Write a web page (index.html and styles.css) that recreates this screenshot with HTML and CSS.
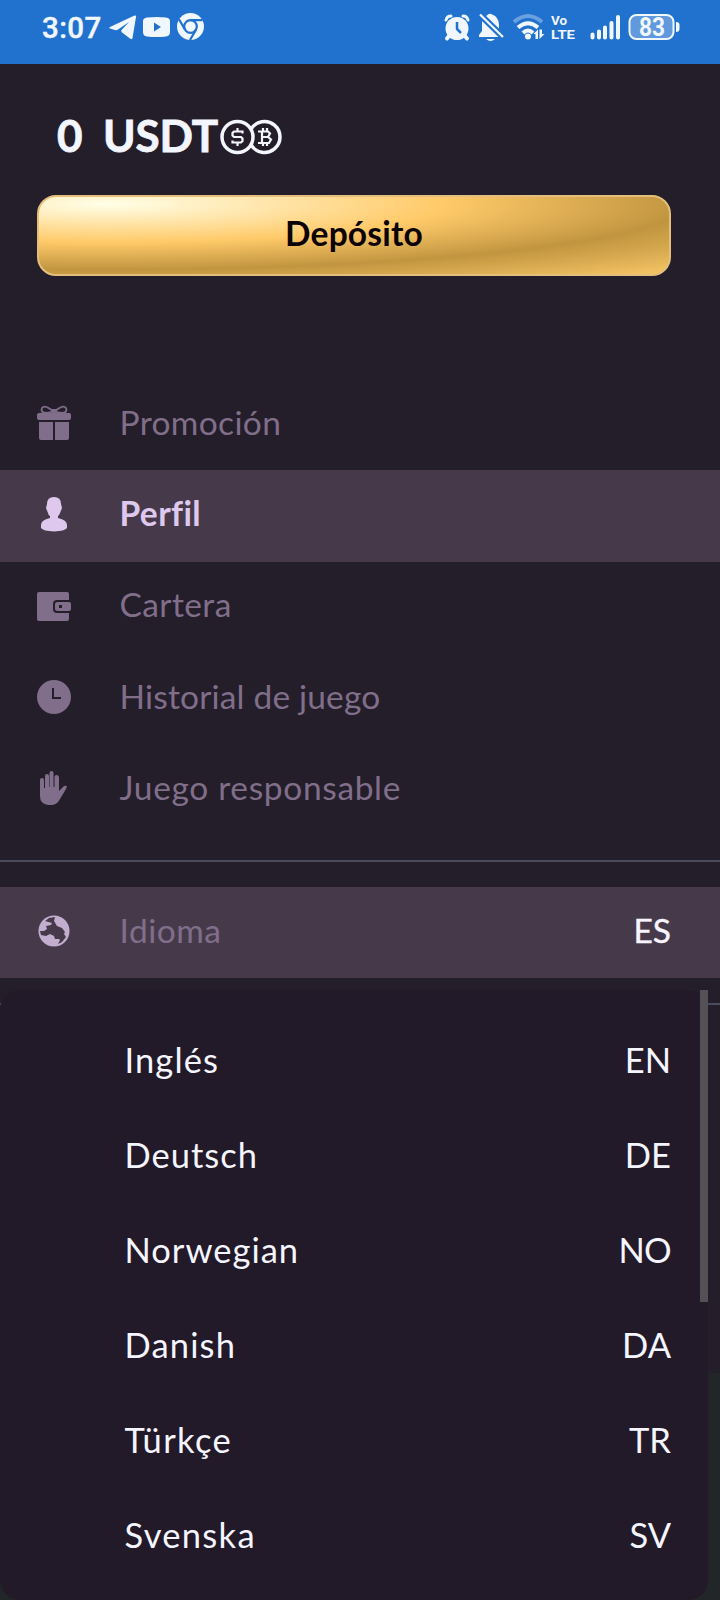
FILE: index.html
```html
<!DOCTYPE html>
<html lang="es">
<head>
<meta charset="utf-8">
<title>Perfil</title>
<link rel="stylesheet" href="styles.css">
</head>
<body>
<div class="screen">
  <header class="status">
    <span class="time">3:07</span>
    <svg class="status-left" width="96" height="28" viewBox="0 0 96 28" fill="currentColor">
      <path d="M1 14 25.500 2.500Q27.500 2 27 4L23.500 25Q23 27 21 25.500L13 19.500Q11.500 18 13 16.500L20 9 9 16.500Q7.500 17.500 6 17L1 15.500Q-.5 15 1 14Z"/>
      <path fill-rule="evenodd" d="M38 4.500Q48 3.500 57 4.500 61 5 61 8V19Q61 23 57 23.500 48 24.500 38 23.500 34 23 34 19V8Q34 5 38 4.500ZM45 9.500V18.500L52 14Z"/>
      <circle cx="81.500" cy="13.500" r="13.500"/>
      <g fill="none" stroke="#2172ce" stroke-width="2.200"><circle cx="81.500" cy="13.500" r="6.300"/><path d="M81.500 7.200H93.500M76 16.600 70 6.300M87 16.600 81 27"/></g>
    </svg>
    <svg class="status-right" width="240" height="30" viewBox="0 0 240 30" fill="currentColor">
      <circle cx="13" cy="15.500" r="11.500"/>
      <path d="M2 7Q3 3 7 3M24 7Q23 3 19 3" fill="none" stroke="currentColor" stroke-width="3" stroke-linecap="round"/>
      <path d="M5 23 3 25.500M21 23 23 25.500" stroke="currentColor" stroke-width="4" stroke-linecap="round"/>
      <path d="M13 9V16L17 20" fill="none" stroke="#2172ce" stroke-width="2.500"/>
      <path d="M39 6Q43 2 44 1.500 46 0 48 1.500 55 4 55 12V18L59 24H35V22L38 18V9Z"/>
      <path d="M42 26H51Q46.500 30 42 26Z"/>
      <path d="M36 1.500 59 24" stroke="#2172ce" stroke-width="6.500"/><path d="M36 1.500 59 24" stroke="currentColor" stroke-width="2.200"/>
      <g fill="none" stroke="currentColor" stroke-width="4"><path d="M70 9Q84 -3 98 9" opacity=".35"/><path d="M74 14.500Q84 6 94 14.500M79 20Q84 15 89 20"/></g>
      <circle cx="84" cy="23.500" r="3"/>
      <path d="M89.500 21 94 16.500V26H91.500V21ZM95.500 16.500V26L100.500 21H98V16.500Z"/>
      <text class="volte" x="107" y="11.500" textLength="16" lengthAdjust="spacingAndGlyphs">Vo</text>
      <text class="volte" x="107" y="26" textLength="24" lengthAdjust="spacingAndGlyphs">LTE</text>
      <g fill="none" stroke="currentColor" stroke-width="4" stroke-linecap="round"><path d="M148.500 21.500V24.500M155 18.500V24.500M161 14.500V24.500M167.500 10V24.500M174 4V24.500"/></g>
      <rect x="186" y="2.500" width="43" height="23" rx="6" opacity=".3"/>
      <rect x="185.500" y="2" width="44" height="24" rx="7" fill="none" stroke="currentColor" stroke-width="2"/>
      <path d="M232 9Q235.500 9 235.500 12V16Q235.500 19 232 19Z"/>
      <text class="charge" x="195" y="22.500" textLength="26" lengthAdjust="spacingAndGlyphs">83</text>
    </svg>
  </header>

  <section class="wallet">
    <div class="balance">
      <span class="amount">0</span><span class="currency">USDT</span>
      <svg class="coins" width="64" height="36" viewBox="0 0 64 36" fill="none" stroke="currentColor">
        <circle cx="17.500" cy="18" r="15.500" stroke-width="3.500"/>
        <path d="M31 10.400A15.500 15.500 0 1 1 31 25.600" stroke-width="3.500"/>
        <path d="M22.500 14.500V12.500H14L12.500 14V16.500L14 18H21L22.500 19.500V22L21 23.500H12.500V21.500M17.500 9V12M17.500 24V27" stroke-width="2.200"/>
        <path d="M38 12.500H48L50 14.500 48 18H42.500M48 18 51 20.500 49 24H38M42 12.500V24M43 9V12M47 9V12M43 24V27M47 24V27" stroke-width="2.200"/>
      </svg>
    </div>
    <button class="deposit"><span class="deposit-label">Depósito</span></button>
  </section>

  <nav class="menu">
    <a class="item">
      <svg class="icon" viewBox="0 0 36 36" fill="currentColor"><path d="M3 8H33Q35 8 35 10V13Q35 15 33 15H3Q1 15 1 13V10Q1 8 3 8ZM3 17H17V35H5Q3 35 3 33ZM19 17H33V33Q33 35 31 35H19Z"/><path d="M18 7Q9-1 6 3 4 8 11 8 16 7 18 6 20 7 25 8 32 8 30 3 27-1 18 7Z" fill="none" stroke="currentColor" stroke-width="1.800"/><rect x="15" y="4" width="6" height="4" rx="2"/></svg>
      <span class="label promo">Promoción</span>
    </a>
    <a class="item active">
      <svg class="icon" viewBox="0 0 36 36" fill="currentColor"><path d="M18 1Q25 1 25 8L26 12 24 17Q23 20 22 20V22Q31 24 31 29V32Q29 35 18 35.500 7 35 5 32V29Q5 24 14 22V20Q12 19 12 17L10 12 11 8Q11 1 18 1Z"/></svg>
      <span class="label profile">Perfil</span>
    </a>
    <a class="item">
      <svg class="icon" viewBox="0 0 36 36" fill="currentColor"><path d="M3 4H31Q33 4 33 6V12H21Q17 12 17 16V21Q17 25 21 25H33V31Q33 33 31 33H3Q1 33 1 31V6Q1 4 3 4Z"/><path fill-rule="evenodd" d="M21.500 14H33Q35 14 35 16V21Q35 23 33 23H21.500Q19 23 19 21V16Q19 14 21.500 14ZM23 17V20H26V17Z"/></svg>
      <span class="label cartera">Cartera</span>
    </a>
    <a class="item">
      <svg class="icon" viewBox="0 0 36 36" fill="currentColor"><path fill-rule="evenodd" d="M18 1A17 17 0 1 1 18 35 17 17 0 1 1 18 1ZM16 9V20H25V18H18V9Z"/></svg>
      <span class="label history">Historial de juego</span>
    </a>
    <a class="item">
      <svg class="icon" viewBox="0 0 36 36" fill="currentColor"><path d="M4 10Q4 8 6 8T8 10V18H9V6Q9 4 11 4T13 6V17H13.500V3Q13.500 1 15.500 1T17.500 3V17H18.500V7Q18.500 5 20.500 5T23 7V21L27 17Q29 15 31 16.500L30 19 24 29Q21 35 15 35H12Q4 34 4 26Z"/></svg>
      <span class="label responsible">Juego responsable</span>
    </a>
  </nav>

  <section class="language">
    <a class="item highlighted">
      <svg class="icon globe" viewBox="0 0 36 36"><circle cx="18" cy="18" r="15.500" fill="currentColor"/><path d="M9 8 13 5 19 4 18 8 21 13 26 15 29 19 28 21 30 24 26 29 22 31 24 27 23 26H19L18 23 14 21 10 23 5 22 4 18 8 18 11 16 10 13 15 12 16 10Z" fill="#463a4a"/></svg>
      <span class="label idioma">Idioma</span>
      <span class="code current">ES</span>
    </a>
  </section>

  <div class="dropdown">
    <div class="option"><span class="o1">Inglés</span><span>EN</span></div>
    <div class="option"><span class="o2">Deutsch</span><span>DE</span></div>
    <div class="option"><span class="o3">Norwegian</span><span class="no">NO</span></div>
    <div class="option"><span class="o4">Danish</span><span>DA</span></div>
    <div class="option"><span class="o5">Türkçe</span><span>TR</span></div>
    <div class="option"><span class="o6">Svenska</span><span>SV</span></div>
    <div class="scrollbar"></div>
  </div>
</div>
</body>
</html>
```
FILE: styles.css
```css
* { box-sizing: border-box; }
body { margin: 0; background: #23272a; font-family: Lato, "Noto Sans", sans-serif; font-variant-ligatures: none; }
.screen { position: relative; width: 720px; height: 1600px; overflow: hidden; background: linear-gradient(#231e29 1373px, #222628 1373px); }
.status { display: flex; align-items: flex-start; height: 64px; padding: 13px 0 0 42px; background: #2172ce; color: #f1f7ff; }
.time { width: 67px; padding-top: 1px; font: 500 29.500px/28px Roboto, sans-serif; letter-spacing: .4px; -webkit-text-stroke: .4px currentColor; }
.status-right { margin-left: 239px; overflow: visible; }
.volte { font: 700 12.400px Roboto, sans-serif; }
.charge { font: 700 25px Roboto, sans-serif; }
.wallet { height: 315px; padding: 49px 49px 0 37px; }
.balance { display: flex; align-items: center; height: 48px; padding-left: 20px; color: #f3f6ff; font: 700 44px/48px Lato, sans-serif; }
.amount { width: 46px; padding-bottom: 4px; -webkit-text-stroke: .8px currentColor; }
.currency { width: 116px; padding-bottom: 4px; white-space: nowrap; letter-spacing: -.1px; -webkit-text-stroke: .8px currentColor; }
.coins { margin-left: 1px; }
.deposit { display: flex; align-items: center; justify-content: center; width: 634px; height: 81px; margin-top: 34px; padding: 0; border: 2px solid #e3be7c; border-radius: 19px; background: radial-gradient(860px 98px at 68px 7px, #ffffe8 0%, #ffca69 39%, #c19540 67%, #fccb69 100%); color: #0b0205; font: 700 33.500px/40px Lato, sans-serif; }
.deposit-label { padding-bottom: 6px; letter-spacing: .2px; }
.menu { height: 483px; border-bottom: 2px solid #4a4a5a; }
.item { display: flex; align-items: center; height: 91.300px; padding: 0 49px 3px 36px; color: #816e8b; font-size: 33.500px; line-height: 40px; }
.active { background: #463a4a; color: #dfc8ee; font-weight: 700; }
.icon { width: 36px; height: 36px; flex: none; margin-right: 47.500px; }
.label, .option span { white-space: nowrap; }
.label, .code { padding-bottom: 3px; }
.promo { letter-spacing: .35px; }
.profile { letter-spacing: .4px; }
.cartera { letter-spacing: .4px; }
.history { letter-spacing: .18px; }
.responsible { letter-spacing: .65px; }
.idioma { letter-spacing: .5px; }
.language { height: 143px; padding-top: 25px; border-bottom: 2px solid #4a4a5a; }
.highlighted { height: 91px; background: #463a4a; }
.globe { color: #c4aed0; }
.code { margin-left: auto; color: #f8f4ff; -webkit-text-stroke: .4px currentColor; }
.dropdown { position: absolute; left: 0; top: 990px; width: 708px; height: 610px; padding-top: 23px; border-radius: 20px; background: #221a28; color: #f5f5ff; }
.option { display: flex; align-items: center; justify-content: space-between; height: 95px; padding: 0 37px 1px 124.500px; font-size: 34.500px; line-height: 40px; }
.o1 { letter-spacing: 1.100px; }
.o2 { letter-spacing: 1px; }
.o3 { letter-spacing: 1px; }
.o4 { letter-spacing: 1.150px; }
.o5 { letter-spacing: 1.350px; }
.o6 { letter-spacing: 1.300px; }
.no { letter-spacing: -.7px; }
.scrollbar { position: absolute; top: 0; right: 0; width: 8px; height: 312px; background: #535056; }
```
